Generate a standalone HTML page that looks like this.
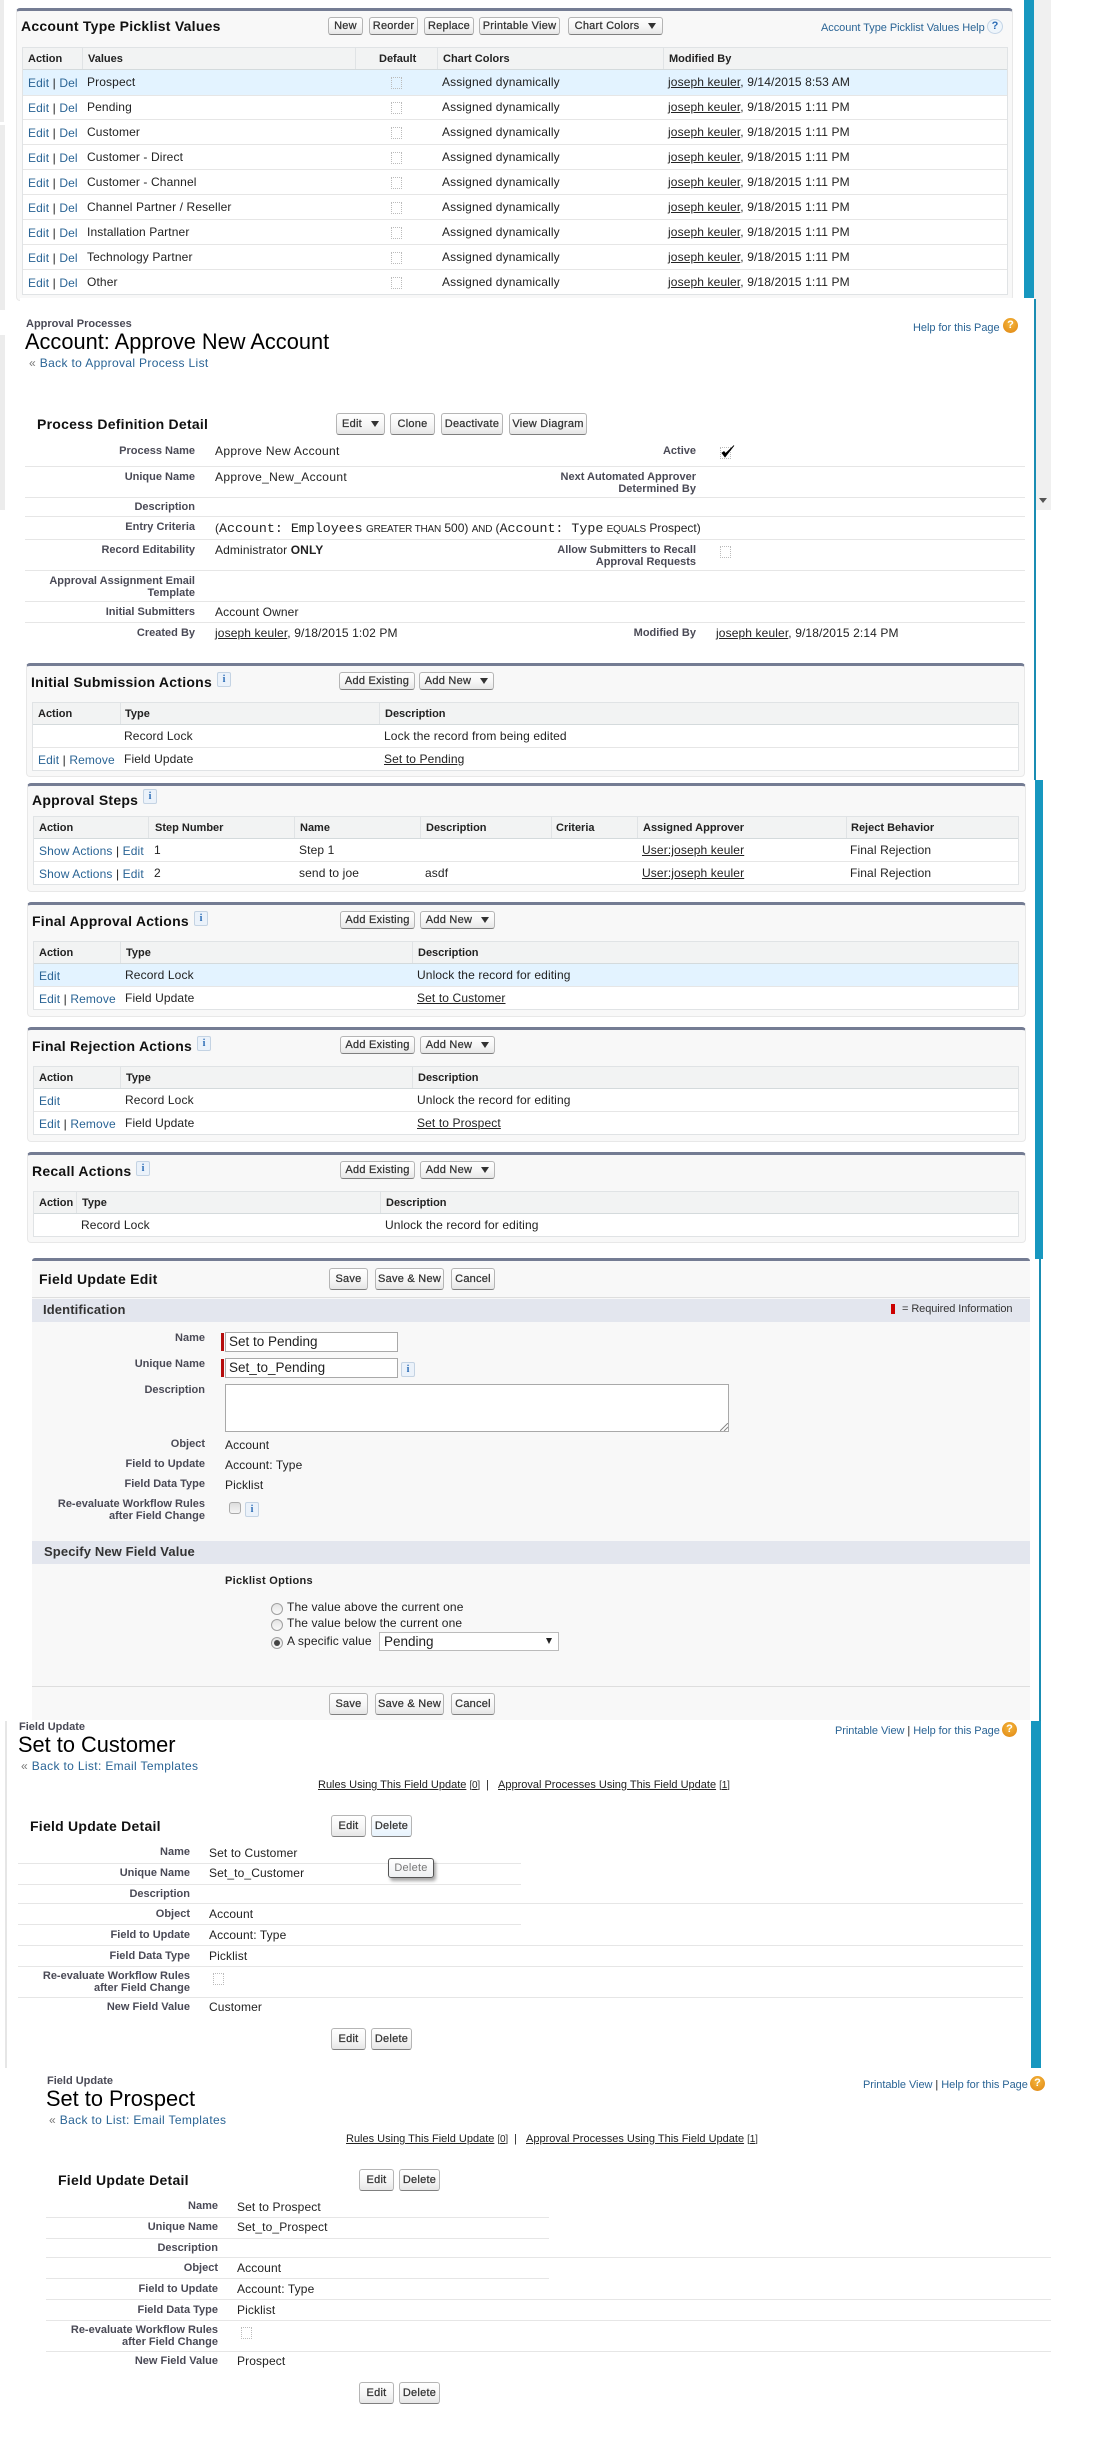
<!DOCTYPE html>
<html><head><meta charset="utf-8"><title>Approval Process</title>
<style>
html,body{margin:0;padding:0;background:#fff}
#w{position:relative;width:1102px;height:2454px;overflow:hidden;background:#fff;font-family:"Liberation Sans",Arial,sans-serif;color:#222}
p{position:absolute;margin:0;white-space:nowrap;line-height:16px;font-size:12px;letter-spacing:.12px}
a{color:#2a6495;text-decoration:none}
u{color:#222;text-decoration:underline}
.h{font-weight:bold;font-size:14px;color:#111;letter-spacing:.25px}
.th{font-weight:bold;font-size:11px;color:#222;letter-spacing:0}
.l{font-weight:bold;font-size:11px;color:#4a4a56;text-align:right;letter-spacing:0}
.sm{font-weight:bold;font-size:11px;color:#4a4a56;letter-spacing:0}
.h1{font-size:21.8px;line-height:26px;color:#000;letter-spacing:0}
.bk{letter-spacing:.35px}.bk span{color:#777}
.hp{font-size:11px;letter-spacing:-.05px}
.ru{font-size:11px;letter-spacing:0}
.x{position:absolute}
.pn{position:absolute;box-sizing:border-box;background:#f8f8f8;border:1px solid #e8e8e8;border-top:3px solid #747c93;border-radius:4px}
.tb{position:absolute;box-sizing:border-box;background:#fff;border:1px solid #e0e3e5}
.hd{position:absolute;background:#f2f3f3;border-bottom:1px solid #d4dadc}
.hl{position:absolute;height:1px;background:#e6e6e6}
.vl{position:absolute;width:1px;background:#e0e3e5}
.b{position:absolute;box-sizing:border-box;display:flex;align-items:center;justify-content:center;border:1px solid #b5b5b5;border-bottom-color:#7f7f7f;border-radius:3px;background:linear-gradient(#fff,#f6f6f6 55%,#e6e6e6);font-weight:normal;font-size:11px;color:#333;white-space:nowrap;letter-spacing:.25px;-webkit-text-stroke:.25px #333}
.c{display:inline-block;width:0;height:0;border:4px solid transparent;border-top:6px solid #333;border-bottom:0;margin-left:9px}
.cb{position:absolute;box-sizing:border-box;width:11px;height:12px;border:1px dotted #bbb}
.i{position:absolute;box-sizing:border-box;width:14px;height:15px;border:1px solid #c4d3e3;border-radius:2px;background:#ebf2fa;color:#2a6bb5;font:bold 10px/13px "Liberation Serif",serif;text-align:center}
.o{position:absolute;width:15px;height:15px;border-radius:50%;background:radial-gradient(circle at 50% 35%,#f5b73d,#df8512);color:#fff;font:bold 11px/15px "Liberation Sans",sans-serif;text-align:center}
.q{position:absolute;box-sizing:border-box;width:16px;height:15px;border-radius:50%;border:1px solid #c3d4e6;background:#eef5fb;color:#2a6bb5;font:bold 11px/13px "Liberation Sans",sans-serif;text-align:center}
.in{position:absolute;box-sizing:border-box;background:#fff;border:1px solid #a9a9a9;font-size:13.5px;line-height:18px;padding-left:3px;color:#222}
.sec{position:absolute;background:#e3e6ee;left:32px;width:998px;height:23px}
.rd{position:absolute;box-sizing:border-box;width:12px;height:12px;border-radius:50%;border:1px solid #a0a0a0;background:linear-gradient(#e4e4e4,#fafafa)}
.mono{font-family:"Liberation Mono",monospace;font-size:13.3px;letter-spacing:0}
small{font-size:10px;letter-spacing:-.2px}
</style></head><body><div id="w">

<!-- edges -->
<div class="x" style="left:0;top:0;width:4px;height:122px;background:#ececec"></div>
<div class="x" style="left:0;top:125px;width:5px;height:185px;background:#ececec"></div>
<div class="x" style="left:0;top:335px;width:5px;height:175px;background:#ececec"></div>
<div class="x" style="left:1024px;top:0;width:10px;height:299px;background:#1797bf"></div>
<div class="x" style="left:1034px;top:0;width:17px;height:510px;background:#f0f0f0"></div>
<div class="x" style="left:1039px;top:498px;border:4px solid transparent;border-top:5px solid #555;border-bottom:0"></div>
<div class="x" style="left:1034px;top:299px;width:2px;height:481px;background:#1a8db3"></div>
<div class="x" style="left:1035px;top:780px;width:8px;height:479px;background:#1797bf"></div>
<div class="x" style="left:1039px;top:1259px;width:2px;height:462px;background:#1a8db3"></div>
<div class="x" style="left:1031px;top:1721px;width:10px;height:347px;background:#1797bf"></div>
<div class="x" style="left:5px;top:1721px;width:2px;height:347px;background:#e6e6e6"></div>

<!-- Picklist -->
<div class="pn" style="left:16px;top:8px;width:997px;height:293px"></div>
<p class="h" style="left:21px;top:18px">Account Type Picklist Values</p>
<div class="b" style="left:328px;top:17px;width:35px;height:18px">New</div>
<div class="b" style="left:369px;top:17px;width:49px;height:18px">Reorder</div>
<div class="b" style="left:424px;top:17px;width:50px;height:18px">Replace</div>
<div class="b" style="left:479px;top:17px;width:81px;height:18px">Printable View</div>
<div class="b" style="left:568px;top:17px;width:95px;height:18px">Chart Colors<i class="c"></i></div>
<p class="hp" style="left:821px;top:20px"><a>Account Type Picklist Values Help</a></p>
<div class="q" style="left:987px;top:19px">?</div>
<div class="tb" style="left:22px;top:47px;width:986px;height:248px"></div>
<div class="hd" style="left:23px;top:48px;width:984px;height:21px"></div>
<div class="x" style="left:23px;top:70px;width:984px;height:25px;background:#e3f3ff"></div>
<div class="vl" style="left:82px;top:48px;height:21px"></div><div class="vl" style="left:355px;top:48px;height:21px"></div><div class="vl" style="left:437px;top:48px;height:21px"></div><div class="vl" style="left:663px;top:48px;height:21px"></div>
<p class="th" style="left:28px;top:51px">Action</p><p class="th" style="left:88px;top:51px">Values</p><p class="th" style="left:379px;top:51px">Default</p><p class="th" style="left:443px;top:51px">Chart Colors</p><p class="th" style="left:669px;top:51px">Modified By</p>
<div class="hl" style="left:23px;top:119px;width:984px"></div><div class="hl" style="left:23px;top:144px;width:984px"></div><div class="hl" style="left:23px;top:169px;width:984px"></div><div class="hl" style="left:23px;top:194px;width:984px"></div><div class="hl" style="left:23px;top:219px;width:984px"></div><div class="hl" style="left:23px;top:244px;width:984px"></div><div class="hl" style="left:23px;top:269px;width:984px"></div>
<div class="hl" style="left:23px;top:95px;width:984px"></div>

<p style="left:28px;top:75px"><a>Edit</a> | <a>Del</a></p><p style="left:87px;top:74px">Prospect</p><div class="cb" style="left:391px;top:77px"></div><p style="left:442px;top:74px">Assigned dynamically</p><p style="left:668px;top:74px"><u>joseph keuler</u>, 9/14/2015 8:53 AM</p>
<p style="left:28px;top:100px"><a>Edit</a> | <a>Del</a></p><p style="left:87px;top:99px">Pending</p><div class="cb" style="left:391px;top:102px"></div><p style="left:442px;top:99px">Assigned dynamically</p><p style="left:668px;top:99px"><u>joseph keuler</u>, 9/18/2015 1:11 PM</p>
<p style="left:28px;top:125px"><a>Edit</a> | <a>Del</a></p><p style="left:87px;top:124px">Customer</p><div class="cb" style="left:391px;top:127px"></div><p style="left:442px;top:124px">Assigned dynamically</p><p style="left:668px;top:124px"><u>joseph keuler</u>, 9/18/2015 1:11 PM</p>
<p style="left:28px;top:150px"><a>Edit</a> | <a>Del</a></p><p style="left:87px;top:149px">Customer - Direct</p><div class="cb" style="left:391px;top:152px"></div><p style="left:442px;top:149px">Assigned dynamically</p><p style="left:668px;top:149px"><u>joseph keuler</u>, 9/18/2015 1:11 PM</p>
<p style="left:28px;top:175px"><a>Edit</a> | <a>Del</a></p><p style="left:87px;top:174px">Customer - Channel</p><div class="cb" style="left:391px;top:177px"></div><p style="left:442px;top:174px">Assigned dynamically</p><p style="left:668px;top:174px"><u>joseph keuler</u>, 9/18/2015 1:11 PM</p>
<p style="left:28px;top:200px"><a>Edit</a> | <a>Del</a></p><p style="left:87px;top:199px">Channel Partner / Reseller</p><div class="cb" style="left:391px;top:202px"></div><p style="left:442px;top:199px">Assigned dynamically</p><p style="left:668px;top:199px"><u>joseph keuler</u>, 9/18/2015 1:11 PM</p>
<p style="left:28px;top:225px"><a>Edit</a> | <a>Del</a></p><p style="left:87px;top:224px">Installation Partner</p><div class="cb" style="left:391px;top:227px"></div><p style="left:442px;top:224px">Assigned dynamically</p><p style="left:668px;top:224px"><u>joseph keuler</u>, 9/18/2015 1:11 PM</p>
<p style="left:28px;top:250px"><a>Edit</a> | <a>Del</a></p><p style="left:87px;top:249px">Technology Partner</p><div class="cb" style="left:391px;top:252px"></div><p style="left:442px;top:249px">Assigned dynamically</p><p style="left:668px;top:249px"><u>joseph keuler</u>, 9/18/2015 1:11 PM</p>
<p style="left:28px;top:275px"><a>Edit</a> | <a>Del</a></p><p style="left:87px;top:274px">Other</p><div class="cb" style="left:391px;top:277px"></div><p style="left:442px;top:274px">Assigned dynamically</p><p style="left:668px;top:274px"><u>joseph keuler</u>, 9/18/2015 1:11 PM</p>
<div class="x" style="left:20px;top:298px;width:1014px;height:5px;background:#fff"></div>

<!-- Process header -->
<p class="sm" style="left:26px;top:316px">Approval Processes</p>
<p class="h1" style="left:25px;top:329px">Account: Approve New Account</p>
<p class="bk" style="left:29px;top:355px"><span>«</span> <a>Back to Approval Process List</a></p>
<p class="hp" style="left:913px;top:320px"><a>Help for this Page</a></p>
<div class="o" style="left:1003px;top:318px">?</div>

<p class="h" style="left:37px;top:416px">Process Definition Detail</p>
<div class="b" style="left:336px;top:413px;width:49px;height:22px">Edit<i class="c"></i></div>
<div class="b" style="left:390px;top:413px;width:45px;height:22px">Clone</div>
<div class="b" style="left:441px;top:413px;width:62px;height:22px">Deactivate</div>
<div class="b" style="left:509px;top:413px;width:78px;height:22px">View Diagram</div>

<p class="l" style="right:907px;top:443px">Process Name</p><p style="left:215px;top:443px;letter-spacing:.35px">Approve New Account</p><p class="l" style="right:406px;top:443px">Active</p>
<div class="cb" style="left:720px;top:447px"></div>
<svg class="x" style="left:720px;top:444px" width="16" height="16" viewBox="0 0 16 16"><path d="M2 9 L5 13 L14 1.5 L5.5 9.5 L4 7.5 Z" fill="#000" stroke="#000" stroke-width=".8"/></svg>
<div class="hl" style="left:25px;top:466px;width:1000px"></div>
<p class="l" style="right:907px;top:469px">Unique Name</p><p style="left:215px;top:469px;letter-spacing:.35px">Approve_New_Account</p>
<p class="l" style="right:406px;top:469px">Next Automated Approver</p><p class="l" style="right:406px;top:481px">Determined By</p>
<div class="hl" style="left:25px;top:497px;width:1000px"></div>
<p class="l" style="right:907px;top:499px">Description</p>
<div class="hl" style="left:25px;top:516px;width:1000px"></div>
<p class="l" style="right:907px;top:519px">Entry Criteria</p>
<p style="left:215px;top:520px;letter-spacing:0">(<span class="mono">Account: Employees</span> <small>GREATER THAN</small> 500) <small>AND</small> (<span class="mono">Account: Type</span> <small>EQUALS</small> Prospect)</p>
<div class="hl" style="left:25px;top:539px;width:1000px"></div>
<p class="l" style="right:907px;top:542px">Record Editability</p><p style="left:215px;top:542px">Administrator <b>ONLY</b></p>
<p class="l" style="right:406px;top:542px">Allow Submitters to Recall</p><p class="l" style="right:406px;top:554px">Approval Requests</p>
<div class="cb" style="left:720px;top:546px"></div>
<div class="hl" style="left:25px;top:570px;width:1000px"></div>
<p class="l" style="right:907px;top:573px">Approval Assignment Email</p><p class="l" style="right:907px;top:585px">Template</p>
<div class="hl" style="left:25px;top:601px;width:1000px"></div>
<p class="l" style="right:907px;top:604px">Initial Submitters</p><p style="left:215px;top:604px">Account Owner</p>
<div class="hl" style="left:25px;top:622px;width:1000px"></div>
<p class="l" style="right:907px;top:625px">Created By</p><p style="left:215px;top:625px"><u>joseph keuler</u>, 9/18/2015 1:02 PM</p>
<p class="l" style="right:406px;top:625px">Modified By</p><p style="left:716px;top:625px"><u>joseph keuler</u>, 9/18/2015 2:14 PM</p>

<!-- Initial Submission -->
<div class="pn" style="left:26px;top:663px;width:999px;height:114px"></div>
<p class="h" style="left:31px;top:674px">Initial Submission Actions</p>
<div class="i" style="left:217px;top:672px">i</div>
<div class="b" style="left:339px;top:672px;width:76px;height:18px">Add Existing</div>
<div class="b" style="left:419px;top:672px;width:75px;height:18px">Add New<i class="c"></i></div>
<div class="tb" style="left:32px;top:702px;width:987px;height:69px"></div>
<div class="hd" style="left:33px;top:703px;width:985px;height:21px"></div>
<div class="vl" style="left:120px;top:703px;height:21px"></div><div class="vl" style="left:379px;top:703px;height:21px"></div>
<p class="th" style="left:38px;top:706px">Action</p><p class="th" style="left:125px;top:706px">Type</p><p class="th" style="left:385px;top:706px">Description</p>
<p style="left:124px;top:728px">Record Lock</p><p style="left:384px;top:728px">Lock the record from being edited</p>
<div class="hl" style="left:33px;top:747px;width:985px"></div>
<p style="left:38px;top:752px"><a>Edit</a> | <a>Remove</a></p><p style="left:124px;top:751px">Field Update</p><p style="left:384px;top:751px"><u>Set to Pending</u></p>

<!-- Approval Steps -->
<div class="pn" style="left:27px;top:783px;width:999px;height:109px"></div>
<p class="h" style="left:32px;top:792px">Approval Steps</p>
<div class="i" style="left:143px;top:789px">i</div>
<div class="tb" style="left:33px;top:816px;width:986px;height:69px"></div>
<div class="hd" style="left:34px;top:817px;width:984px;height:21px"></div>
<div class="vl" style="left:148px;top:817px;height:21px"></div><div class="vl" style="left:294px;top:817px;height:21px"></div><div class="vl" style="left:420px;top:817px;height:21px"></div><div class="vl" style="left:551px;top:817px;height:21px"></div><div class="vl" style="left:637px;top:817px;height:21px"></div><div class="vl" style="left:846px;top:817px;height:21px"></div>
<p class="th" style="left:39px;top:820px">Action</p><p class="th" style="left:155px;top:820px">Step Number</p><p class="th" style="left:300px;top:820px">Name</p><p class="th" style="left:426px;top:820px">Description</p><p class="th" style="left:556px;top:820px">Criteria</p><p class="th" style="left:643px;top:820px">Assigned Approver</p><p class="th" style="left:851px;top:820px">Reject Behavior</p>
<p style="left:39px;top:843px"><a>Show Actions</a> | <a>Edit</a></p><p style="left:154px;top:842px">1</p><p style="left:299px;top:842px">Step 1</p><p style="left:642px;top:842px"><u>User:joseph keuler</u></p><p style="left:850px;top:842px">Final Rejection</p>
<div class="hl" style="left:34px;top:861px;width:984px"></div>
<p style="left:39px;top:866px"><a>Show Actions</a> | <a>Edit</a></p><p style="left:154px;top:865px">2</p><p style="left:299px;top:865px">send to joe</p><p style="left:425px;top:865px">asdf</p><p style="left:642px;top:865px"><u>User:joseph keuler</u></p><p style="left:850px;top:865px">Final Rejection</p>

<!-- Final Approval -->
<div class="pn" style="left:27px;top:902px;width:999px;height:115px"></div>
<p class="h" style="left:32px;top:913px">Final Approval Actions</p>
<div class="i" style="left:194px;top:911px">i</div>
<div class="b" style="left:340px;top:911px;width:75px;height:18px">Add Existing</div>
<div class="b" style="left:420px;top:911px;width:75px;height:18px">Add New<i class="c"></i></div>
<div class="tb" style="left:33px;top:941px;width:986px;height:69px"></div>
<div class="hd" style="left:34px;top:942px;width:984px;height:21px"></div>
<div class="x" style="left:34px;top:964px;width:984px;height:22px;background:#e3f3ff"></div>
<div class="vl" style="left:120px;top:942px;height:21px"></div><div class="vl" style="left:412px;top:942px;height:21px"></div>
<p class="th" style="left:39px;top:945px">Action</p><p class="th" style="left:126px;top:945px">Type</p><p class="th" style="left:418px;top:945px">Description</p>
<p style="left:39px;top:968px"><a>Edit</a></p><p style="left:125px;top:967px">Record Lock</p><p style="left:417px;top:967px">Unlock the record for editing</p>
<div class="hl" style="left:34px;top:986px;width:984px"></div>
<p style="left:39px;top:991px"><a>Edit</a> | <a>Remove</a></p><p style="left:125px;top:990px">Field Update</p><p style="left:417px;top:990px"><u>Set to Customer</u></p>

<!-- Final Rejection -->
<div class="pn" style="left:27px;top:1027px;width:999px;height:115px"></div>
<p class="h" style="left:32px;top:1038px">Final Rejection Actions</p>
<div class="i" style="left:197px;top:1036px">i</div>
<div class="b" style="left:340px;top:1036px;width:75px;height:18px">Add Existing</div>
<div class="b" style="left:420px;top:1036px;width:75px;height:18px">Add New<i class="c"></i></div>
<div class="tb" style="left:33px;top:1066px;width:986px;height:69px"></div>
<div class="hd" style="left:34px;top:1067px;width:984px;height:21px"></div>
<div class="vl" style="left:120px;top:1067px;height:21px"></div><div class="vl" style="left:412px;top:1067px;height:21px"></div>
<p class="th" style="left:39px;top:1070px">Action</p><p class="th" style="left:126px;top:1070px">Type</p><p class="th" style="left:418px;top:1070px">Description</p>
<p style="left:39px;top:1093px"><a>Edit</a></p><p style="left:125px;top:1092px">Record Lock</p><p style="left:417px;top:1092px">Unlock the record for editing</p>
<div class="hl" style="left:34px;top:1111px;width:984px"></div>
<p style="left:39px;top:1116px"><a>Edit</a> | <a>Remove</a></p><p style="left:125px;top:1115px">Field Update</p><p style="left:417px;top:1115px"><u>Set to Prospect</u></p>

<!-- Recall -->
<div class="pn" style="left:27px;top:1152px;width:999px;height:91px"></div>
<p class="h" style="left:32px;top:1163px">Recall Actions</p>
<div class="i" style="left:136px;top:1161px">i</div>
<div class="b" style="left:340px;top:1161px;width:75px;height:18px">Add Existing</div>
<div class="b" style="left:420px;top:1161px;width:75px;height:18px">Add New<i class="c"></i></div>
<div class="tb" style="left:33px;top:1191px;width:986px;height:46px"></div>
<div class="hd" style="left:34px;top:1192px;width:984px;height:21px"></div>
<div class="vl" style="left:76px;top:1192px;height:21px"></div><div class="vl" style="left:380px;top:1192px;height:21px"></div>
<p class="th" style="left:39px;top:1195px">Action</p><p class="th" style="left:82px;top:1195px">Type</p><p class="th" style="left:386px;top:1195px">Description</p>
<p style="left:81px;top:1217px">Record Lock</p><p style="left:385px;top:1217px">Unlock the record for editing</p>

<!-- Field Update Edit -->
<div class="x" style="left:32px;top:1258px;width:998px;height:462px;background:#f8f8f8;border-top:3px solid #747c93;box-sizing:border-box;border-radius:3px 3px 0 0"></div>
<p class="h" style="left:39px;top:1271px">Field Update Edit</p>
<div class="b" style="left:329px;top:1268px;width:39px;height:22px">Save</div>
<div class="b" style="left:375px;top:1268px;width:69px;height:22px">Save &amp; New</div>
<div class="b" style="left:451px;top:1268px;width:44px;height:22px">Cancel</div>
<div class="hl" style="left:32px;top:1297px;width:998px;background:#dedede"></div>
<div class="sec" style="top:1299px"></div>
<p style="left:43px;top:1302px;font-weight:bold;font-size:13px;color:#333">Identification</p>
<div class="x" style="left:891px;top:1304px;width:4px;height:10px;background:#c00"></div>
<p style="left:902px;top:1301px;font-size:11px;letter-spacing:-.08px;color:#333">= Required Information</p>
<p class="l" style="right:897px;top:1330px">Name</p>
<div class="x" style="left:221px;top:1333px;width:3px;height:18px;background:#b50d0d"></div>
<div class="in" style="left:225px;top:1332px;width:173px;height:20px">Set to Pending</div>
<p class="l" style="right:897px;top:1356px">Unique Name</p>
<div class="x" style="left:221px;top:1359px;width:3px;height:18px;background:#b50d0d"></div>
<div class="in" style="left:225px;top:1358px;width:173px;height:20px">Set_to_Pending</div>
<div class="i" style="left:401px;top:1362px">i</div>
<p class="l" style="right:897px;top:1382px">Description</p>
<div class="in" style="left:225px;top:1384px;width:504px;height:48px"></div>
<svg class="x" style="left:720px;top:1423px" width="8" height="8"><path d="M0 8L8 0M4 8L8 4" stroke="#888" stroke-width="1"/></svg>
<p class="l" style="right:897px;top:1436px">Object</p><p style="left:225px;top:1437px">Account</p>
<p class="l" style="right:897px;top:1456px">Field to Update</p><p style="left:225px;top:1457px">Account: Type</p>
<p class="l" style="right:897px;top:1476px">Field Data Type</p><p style="left:225px;top:1477px">Picklist</p>
<p class="l" style="right:897px;top:1496px">Re-evaluate Workflow Rules</p><p class="l" style="right:897px;top:1508px">after Field Change</p>
<div class="x" style="left:229px;top:1502px;width:12px;height:12px;box-sizing:border-box;border:1px solid #aaa;border-radius:3px;background:linear-gradient(#ddd,#f5f5f5)"></div>
<div class="i" style="left:245px;top:1502px">i</div>
<div class="sec" style="top:1541px"></div>
<p style="left:44px;top:1544px;font-weight:bold;font-size:13px;color:#333">Specify New Field Value</p>
<p style="left:225px;top:1573px;font-weight:bold;font-size:11px;color:#222;letter-spacing:.3px">Picklist Options</p>
<div class="rd" style="left:271px;top:1603px"></div><p style="left:287px;top:1599px">The value above the current one</p>
<div class="rd" style="left:271px;top:1619px"></div><p style="left:287px;top:1615px">The value below the current one</p>
<div class="rd" style="left:271px;top:1637px"></div><div class="x" style="left:274px;top:1640px;width:6px;height:6px;border-radius:50%;background:#444"></div><p style="left:287px;top:1633px">A specific value</p>
<div class="in" style="left:379px;top:1632px;width:180px;height:19px;line-height:18px;padding-left:4px;border-color:#bbb">Pending</div>
<div class="x" style="left:546px;top:1638px;border:3.5px solid transparent;border-top:6px solid #222;border-bottom:0"></div>
<div class="hl" style="left:32px;top:1686px;width:998px;background:#dedede"></div>
<div class="b" style="left:329px;top:1693px;width:39px;height:22px">Save</div>
<div class="b" style="left:375px;top:1693px;width:69px;height:22px">Save &amp; New</div>
<div class="b" style="left:451px;top:1693px;width:44px;height:22px">Cancel</div>

<!-- Set to Customer -->
<p class="sm" style="left:19px;top:1719px">Field Update</p>
<p class="h1" style="left:18px;top:1732px">Set to Customer</p>
<p class="bk" style="left:21px;top:1758px"><span>«</span> <a>Back to List: Email Templates</a></p>
<p class="hp" style="left:835px;top:1723px"><a>Printable View</a> | <a>Help for this Page</a></p>
<div class="o" style="left:1002px;top:1722px">?</div>
<p class="ru" style="left:318px;top:1777px"><u>Rules Using This Field Update</u> <small style="color:#333">[<u>0</u>]</small></p>
<p style="left:486px;top:1777px;font-size:11px">|</p>
<p class="ru" style="left:498px;top:1777px"><u>Approval Processes Using This Field Update</u> <small style="color:#333">[<u>1</u>]</small></p>
<p class="h" style="left:30px;top:1818px">Field Update Detail</p>
<div class="b" style="left:331px;top:1815px;width:35px;height:22px">Edit</div>
<div class="b" style="left:371px;top:1815px;width:41px;height:22px;background:linear-gradient(#fff,#e7f3fd)">Delete</div>
<p class="l" style="right:912px;top:1844px">Name</p><p style="left:209px;top:1845px">Set to Customer</p>
<div class="hl" style="left:18px;top:1863px;width:503px"></div>
<p class="l" style="right:912px;top:1865px">Unique Name</p><p style="left:209px;top:1865px">Set_to_Customer</p>
<div class="b" style="left:388px;top:1858px;width:46px;height:20px;border-color:#555;background:linear-gradient(#fff,#eef0f2);color:#777;-webkit-text-stroke:0;box-shadow:2px 3px 3px rgba(0,0,0,.35)">Delete</div>
<div class="hl" style="left:18px;top:1884px;width:503px"></div>
<p class="l" style="right:912px;top:1886px">Description</p>
<div class="hl" style="left:18px;top:1903px;width:1005px"></div>
<p class="l" style="right:912px;top:1906px">Object</p><p style="left:209px;top:1906px">Account</p>
<div class="hl" style="left:18px;top:1924px;width:503px"></div>
<p class="l" style="right:912px;top:1927px">Field to Update</p><p style="left:209px;top:1927px">Account: Type</p>
<div class="hl" style="left:18px;top:1945px;width:1005px"></div>
<p class="l" style="right:912px;top:1948px">Field Data Type</p><p style="left:209px;top:1948px">Picklist</p>
<div class="hl" style="left:18px;top:1966px;width:1005px"></div>
<p class="l" style="right:912px;top:1968px">Re-evaluate Workflow Rules</p><p class="l" style="right:912px;top:1980px">after Field Change</p>
<div class="cb" style="left:213px;top:1973px"></div>
<div class="hl" style="left:18px;top:1997px;width:1005px"></div>
<p class="l" style="right:912px;top:1999px">New Field Value</p><p style="left:209px;top:1999px">Customer</p>
<div class="b" style="left:331px;top:2028px;width:35px;height:22px">Edit</div>
<div class="b" style="left:371px;top:2028px;width:41px;height:22px">Delete</div>

<!-- Set to Prospect -->
<p class="sm" style="left:47px;top:2073px">Field Update</p>
<p class="h1" style="left:46px;top:2086px">Set to Prospect</p>
<p class="bk" style="left:49px;top:2112px"><span>«</span> <a>Back to List: Email Templates</a></p>
<p class="hp" style="left:863px;top:2077px"><a>Printable View</a> | <a>Help for this Page</a></p>
<div class="o" style="left:1030px;top:2076px">?</div>
<p class="ru" style="left:346px;top:2131px"><u>Rules Using This Field Update</u> <small style="color:#333">[<u>0</u>]</small></p>
<p style="left:514px;top:2131px;font-size:11px">|</p>
<p class="ru" style="left:526px;top:2131px"><u>Approval Processes Using This Field Update</u> <small style="color:#333">[<u>1</u>]</small></p>
<p class="h" style="left:58px;top:2172px">Field Update Detail</p>
<div class="b" style="left:359px;top:2169px;width:35px;height:22px">Edit</div>
<div class="b" style="left:399px;top:2169px;width:41px;height:22px">Delete</div>
<p class="l" style="right:884px;top:2198px">Name</p><p style="left:237px;top:2199px">Set to Prospect</p>
<div class="hl" style="left:46px;top:2217px;width:503px"></div>
<p class="l" style="right:884px;top:2219px">Unique Name</p><p style="left:237px;top:2219px">Set_to_Prospect</p>
<div class="hl" style="left:46px;top:2238px;width:503px"></div>
<p class="l" style="right:884px;top:2240px">Description</p>
<div class="hl" style="left:46px;top:2257px;width:1005px"></div>
<p class="l" style="right:884px;top:2260px">Object</p><p style="left:237px;top:2260px">Account</p>
<div class="hl" style="left:46px;top:2278px;width:503px"></div>
<p class="l" style="right:884px;top:2281px">Field to Update</p><p style="left:237px;top:2281px">Account: Type</p>
<div class="hl" style="left:46px;top:2299px;width:1005px"></div>
<p class="l" style="right:884px;top:2302px">Field Data Type</p><p style="left:237px;top:2302px">Picklist</p>
<div class="hl" style="left:46px;top:2320px;width:1005px"></div>
<p class="l" style="right:884px;top:2322px">Re-evaluate Workflow Rules</p><p class="l" style="right:884px;top:2334px">after Field Change</p>
<div class="cb" style="left:241px;top:2327px"></div>
<div class="hl" style="left:46px;top:2351px;width:1005px"></div>
<p class="l" style="right:884px;top:2353px">New Field Value</p><p style="left:237px;top:2353px">Prospect</p>
<div class="b" style="left:359px;top:2382px;width:35px;height:22px">Edit</div>
<div class="b" style="left:399px;top:2382px;width:41px;height:22px">Delete</div>

</div></body></html>
